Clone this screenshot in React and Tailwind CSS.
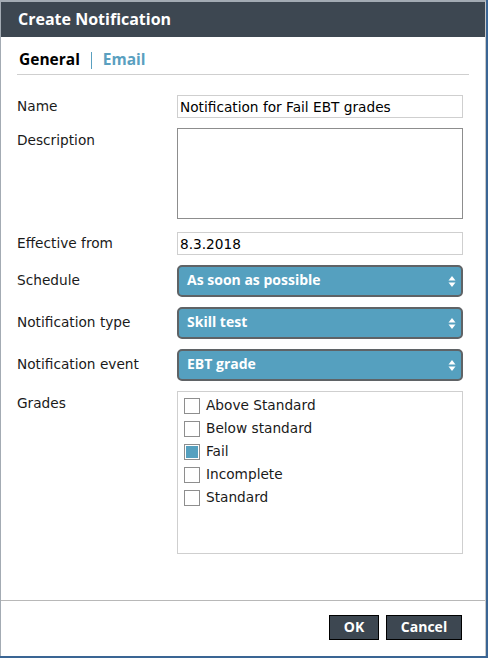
import React, { useState } from 'react'

const font = { fontFamily: '"DejaVu Sans", "Liberation Sans", sans-serif' }
const boldFont = { fontFamily: '"Open Sans", "DejaVu Sans", sans-serif' }

function Arrows() {
  return (
    <svg width="8" height="13" viewBox="0 0 8 13" className="shrink-0">
      <path d="M4 1 L7.5 5.5 L0.5 5.5 Z" fill="white" />
      <path d="M4 12 L7.5 7.5 L0.5 7.5 Z" fill="white" />
    </svg>
  )
}

function Select({ value }) {
  return (
    <div className="flex h-[32px] w-[286px] items-center justify-between rounded-[5px] border-2 border-[#5f6366] bg-[#55a0bf] pl-[8px] pr-[5px]">
      <span className="-mt-[3px] text-[14px] font-bold text-white" style={boldFont}>{value}</span>
      <Arrows />
    </div>
  )
}

function Row({ label, children, className = '', labelClass = 'leading-[22px]' }) {
  return (
    <div className={'flex items-start ' + className}>
      <div className={'w-[160px] shrink-0 text-[13.7px] text-[#1a1a1a] ' + labelClass}>{label}</div>
      {children}
    </div>
  )
}

const grades = ['Above Standard', 'Below standard', 'Fail', 'Incomplete', 'Standard']

export default function App() {
  const [checked, setChecked] = useState({ Fail: true })

  return (
    <div className="h-[658px] w-[488px] bg-[#3a6594] pb-[2px] pr-[2px]" style={font}>
      <div className="flex h-full flex-col border-l border-t-2 border-r border-[#a3abb3] border-r-[#c8c8c8] bg-white">
        <div className="flex h-[35px] shrink-0 items-center bg-[#3d4751] pl-[17px]">
          <span className="-mt-[1px] text-[16px] font-bold text-white" style={boldFont}>Create Notification</span>
        </div>

        <div className="mx-[16px] mt-[14px] box-content flex h-[18px] shrink-0 items-center border-b border-[#cfcfcf] pb-[5px]" style={boldFont}>
          <span className="pl-[2px] text-[15.5px] font-bold text-black">General</span>
          <span className="mx-[11px] h-[17px] w-px bg-[#5aa0c0]" />
          <span className="text-[15.5px] font-bold text-[#5aa0c0]">Email</span>
        </div>

        <div className="flex flex-col px-[16px] pt-[20px]">
          <Row label="Name" className="h-[33px]">
            <input
              defaultValue="Notification for Fail EBT grades"
              className="h-[23px] w-[286px] border border-[#cfcfcf] px-[2px] text-[13.7px] text-black outline-none"
              style={font}
            />
          </Row>
          <Row label="Description" className="h-[104px]" labelClass="leading-[24px]">
            <textarea className="h-[91px] w-[286px] resize-none border border-[#8d8d8d] outline-none" />
          </Row>
          <Row label="Effective from" className="h-[33px]">
            <input
              defaultValue="8.3.2018"
              className="h-[23px] w-[286px] border border-[#cfcfcf] px-[2px] text-[13.7px] text-black outline-none"
              style={font}
            />
          </Row>
          <Row label="Schedule" className="h-[42px]" labelClass="leading-[30px]">
            <Select value="As soon as possible" />
          </Row>
          <Row label="Notification type" className="h-[42px]" labelClass="leading-[30px]">
            <Select value="Skill test" />
          </Row>
          <Row label="Notification event" className="h-[42px]" labelClass="leading-[30px]">
            <Select value="EBT grade" />
          </Row>
          <Row label="Grades" labelClass="leading-[24px]">
            <div className="h-[163px] w-[286px] border border-[#cfcfcf] px-[6px] pt-[2px]">
              {grades.map((g) => (
                <label
                  key={g}
                  className="flex h-[23px] cursor-pointer items-center gap-[6px]"
                  onClick={() => setChecked({ ...checked, [g]: !checked[g] })}
                >
                  <span className="flex h-[16px] w-[16px] items-center justify-center border border-[#8e8e8e] bg-white">
                    {checked[g] && <span className="h-[12px] w-[12px] bg-[#55a0bf]" />}
                  </span>
                  <span className="text-[13.7px] text-[#1a1a1a]">{g}</span>
                </label>
              ))}
            </div>
          </Row>
        </div>

        <div className="mt-auto flex h-[56px] shrink-0 items-start justify-end gap-[7px] border-t border-[#b8b8b8] pr-[23px] pt-[14px]">
          <button className="h-[25px] w-[50px] border border-black bg-[#3d4751] pb-[2px] text-[14px] font-bold text-white" style={boldFont}>OK</button>
          <button className="h-[25px] w-[76px] border border-black bg-[#3d4751] pb-[2px] text-[14px] font-bold text-white" style={boldFont}>Cancel</button>
        </div>
      </div>
    </div>
  )
}
